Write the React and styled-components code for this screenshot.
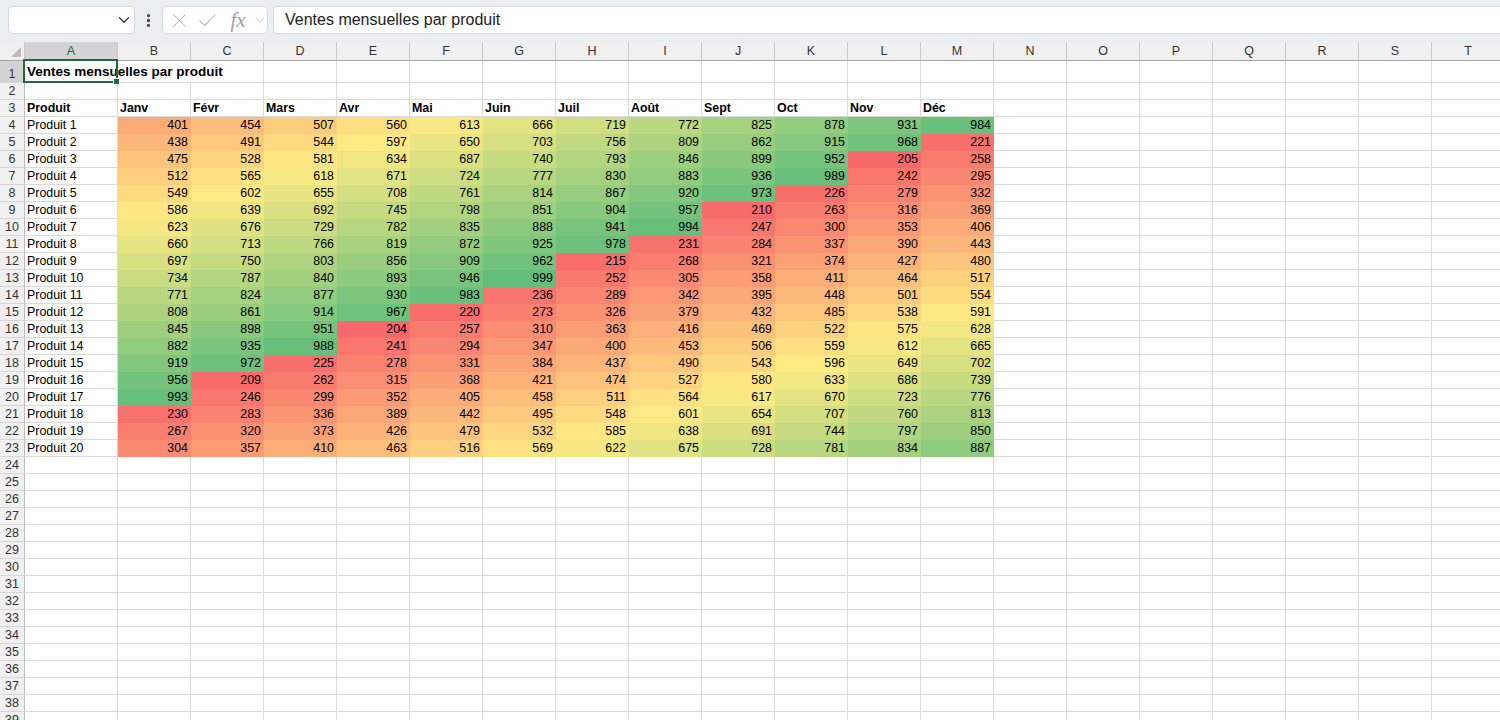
import React from "react";
import styled, { createGlobalStyle } from "styled-components";
import { X, Check, ChevronDown, EllipsisVertical } from "lucide-react";

const Global = createGlobalStyle`
  html, body { margin: 0; padding: 0; background: #ffffff; overflow: hidden; }
  body { font-family: "Liberation Sans", Arial, sans-serif; }
`;

const Page = styled.div`
  width: 1500px;
  height: 720px;
  overflow: hidden;
  display: flex;
  flex-direction: column;
  background: #fff;
`;

const FormulaBar = styled.div`
  height: 42px;
  flex: none;
  background: #e9eef0;
  display: flex;
  align-items: flex-start;
  padding: 6px 0 0 8px;
  box-sizing: border-box;
`;

const Box = styled.div`
  height: 28px;
  box-sizing: border-box;
  background: #fff;
  border: 1px solid #d6dadd;
  border-radius: 5px;
  display: flex;
  align-items: center;
`;

const NameBox = styled(Box)`
  width: 127px;
  justify-content: flex-end;
  padding-right: 1px;
  color: #333;
`;

const Dots = styled.div`
  width: 27px;
  height: 28px;
  display: flex;
  align-items: center;
  justify-content: center;
  color: #444;
`;

const FxBox = styled(Box)`
  width: 106px;
  padding-left: 4px;
  color: #b3b3b3;
`;

const IconSlot = styled.span`
  width: ${(p) => p.$w}px;
  display: flex;
  align-items: center;
  justify-content: center;
`;

const Fx = styled.span`
  font-family: "Liberation Serif", "Times New Roman", serif;
  font-style: italic;
  font-size: 21px;
  color: #a0a0a0;
  width: 30px;
  text-align: center;
  line-height: 20px;
`;

const FormulaInput = styled(Box)`
  flex: 1;
  margin-left: 5px;
  border-right: none;
  border-radius: 5px 0 0 5px;
  padding-left: 11px;
  font-size: 16px;
  color: #222;
`;

const Sheet = styled.div`
  flex: 1;
  overflow: hidden;
  display: grid;
  grid-template-columns: 25px 93px repeat(19, 73px);
  grid-auto-rows: 17px;
  grid-template-rows: 19px 22px;
  font-size: 12px;
  color: #000;
`;

const Corner = styled.div`
  box-sizing: border-box;
  background: #f0f0f0;
  border-right: 1px solid #c8c8c8;
  border-bottom: 1px solid #a3a3a3;
  position: relative;
`;

const Triangle = styled.div`
  position: absolute;
  right: 3px;
  bottom: 3px;
  width: 0;
  height: 0;
  border-left: 10px solid transparent;
  border-bottom: 10px solid #bdbdbd;
`;

const ColHead = styled.div`
  box-sizing: border-box;
  background: ${(p) => (p.$active ? "#d3d3d3" : "#f0f0f0")};
  border-right: 1px solid #c8c8c8;
  border-bottom: 1px solid ${(p) => (p.$active ? "#1e6b41" : "#a3a3a3")};
  color: ${(p) => (p.$active ? "#1e6b41" : "#333")};
  display: flex;
  align-items: center;
  justify-content: center;
  font-size: 12.5px;
`;

const RowHead = styled.div`
  box-sizing: border-box;
  background: ${(p) => (p.$active ? "#d3d3d3" : "#f0f0f0")};
  border-right: 1px solid ${(p) => (p.$active ? "#1e6b41" : "#bdbdbd")};
  border-bottom: 1px solid #d6d6d6;
  color: #333;
  display: flex;
  align-items: flex-end;
  justify-content: center;
  padding-bottom: 1px;
  font-size: 12.5px;
  line-height: 14px;
`;

const Cell = styled.div`
  box-sizing: border-box;
  background: ${(p) => p.$fill || "transparent"};
  border-right: 1px solid ${(p) => (p.$noRight ? "transparent" : p.$fill || "#dadada")};
  border-bottom: 1px solid ${(p) => p.$fill || "#dadada"};
  display: flex;
  align-items: flex-end;
  justify-content: ${(p) => (p.$right ? "flex-end" : "flex-start")};
  padding: 0 2px 1px 2px;
  font-weight: ${(p) => (p.$bold ? 700 : 400)};
  font-size: ${(p) => (p.$title ? "13.5px" : "12.4px")};
  line-height: ${(p) => (p.$title ? "18px" : "14px")};
  white-space: nowrap;
  overflow: visible;
  position: relative;
  z-index: ${(p) => (p.$title ? 2 : 0)};
`;

const Selection = styled.div`
  position: absolute;
  left: -2px;
  top: -2px;
  right: -1px;
  bottom: -1px;
  border: 2px solid #1e6b41;
  pointer-events: none;
`;

const Handle = styled.div`
  position: absolute;
  right: -4px;
  bottom: -4px;
  width: 5px;
  height: 5px;
  background: #1e6b41;
  border: 1px solid #fff;
`;

const COLS = "ABCDEFGHIJKLMNOPQRST".split("");
const MONTHS = ["Janv", "Févr", "Mars", "Avr", "Mai", "Juin", "Juil", "Août", "Sept", "Oct", "Nov", "Déc"];

const value = (r, c) => 200 + ((201 + 37 * (r - 1) + 53 * (c - 1)) % 800);

const all = [];
for (let r = 1; r <= 20; r++) for (let c = 1; c <= 12; c++) all.push(value(r, c));
const sorted = [...all].sort((a, b) => a - b);
const MIN = sorted[0];
const MAX = sorted[sorted.length - 1];
const pos = 0.5 * (sorted.length - 1);
const MID = sorted[Math.floor(pos)] + (sorted[Math.ceil(pos)] - sorted[Math.floor(pos)]) * (pos - Math.floor(pos));

const RED = [248, 105, 107];
const YEL = [255, 235, 132];
const GRN = [99, 190, 123];
const lerp = (a, b, t) => a.map((x, i) => Math.round(x + (b[i] - x) * t));
const scale = (v) => {
  const c = v <= MID ? lerp(RED, YEL, (v - MIN) / (MID - MIN)) : lerp(YEL, GRN, (v - MID) / (MAX - MID));
  return `rgb(${c[0]},${c[1]},${c[2]})`;
};

const TOTAL_ROWS = 40;

function renderRow(r) {
  const cells = [
    <RowHead key={`h${r}`} $active={r === 1}>
      {r}
    </RowHead>,
  ];
  COLS.forEach((col, ci) => {
    const key = `${col}${r}`;
    if (r === 1 && ci === 0) {
      cells.push(
        <Cell key={key} $bold $title $noRight>
          Ventes mensuelles par produit
          <Selection>
            <Handle />
          </Selection>
        </Cell>
      );
      return;
    }
    if (r === 1 && ci === 1) {
      cells.push(<Cell key={key} $noRight />);
      return;
    }
    if (r === 3 && ci <= 12) {
      cells.push(
        <Cell key={key} $bold>
          {ci === 0 ? "Produit" : MONTHS[ci - 1]}
        </Cell>
      );
      return;
    }
    if (r >= 4 && r <= 23 && ci <= 12) {
      const p = r - 3;
      if (ci === 0) {
        cells.push(<Cell key={key}>Produit {p}</Cell>);
      } else {
        const v = value(p, ci);
        cells.push(
          <Cell key={key} $right $fill={scale(v)}>
            {v}
          </Cell>
        );
      }
      return;
    }
    cells.push(<Cell key={key} />);
  });
  return cells;
}

export default function App() {
  const rows = [];
  for (let r = 1; r <= TOTAL_ROWS; r++) rows.push(...renderRow(r));
  return (
    <Page>
      <Global />
      <FormulaBar>
        <NameBox>
          <ChevronDown size={18} strokeWidth={1.6} />
        </NameBox>
        <Dots>
          <EllipsisVertical size={17} strokeWidth={2.6} />
        </Dots>
        <FxBox>
          <IconSlot $w={24}>
            <X size={23} strokeWidth={1.1} />
          </IconSlot>
          <IconSlot $w={32}>
            <Check size={23} strokeWidth={1.1} />
          </IconSlot>
          <Fx>fx</Fx>
          <IconSlot $w={14}>
            <ChevronDown size={16} strokeWidth={1.4} />
          </IconSlot>
        </FxBox>
        <FormulaInput>Ventes mensuelles par produit</FormulaInput>
      </FormulaBar>
      <Sheet>
        <Corner>
          <Triangle />
        </Corner>
        {COLS.map((c, i) => (
          <ColHead key={c} $active={i === 0}>
            {c}
          </ColHead>
        ))}
        {rows}
      </Sheet>
    </Page>
  );
}
